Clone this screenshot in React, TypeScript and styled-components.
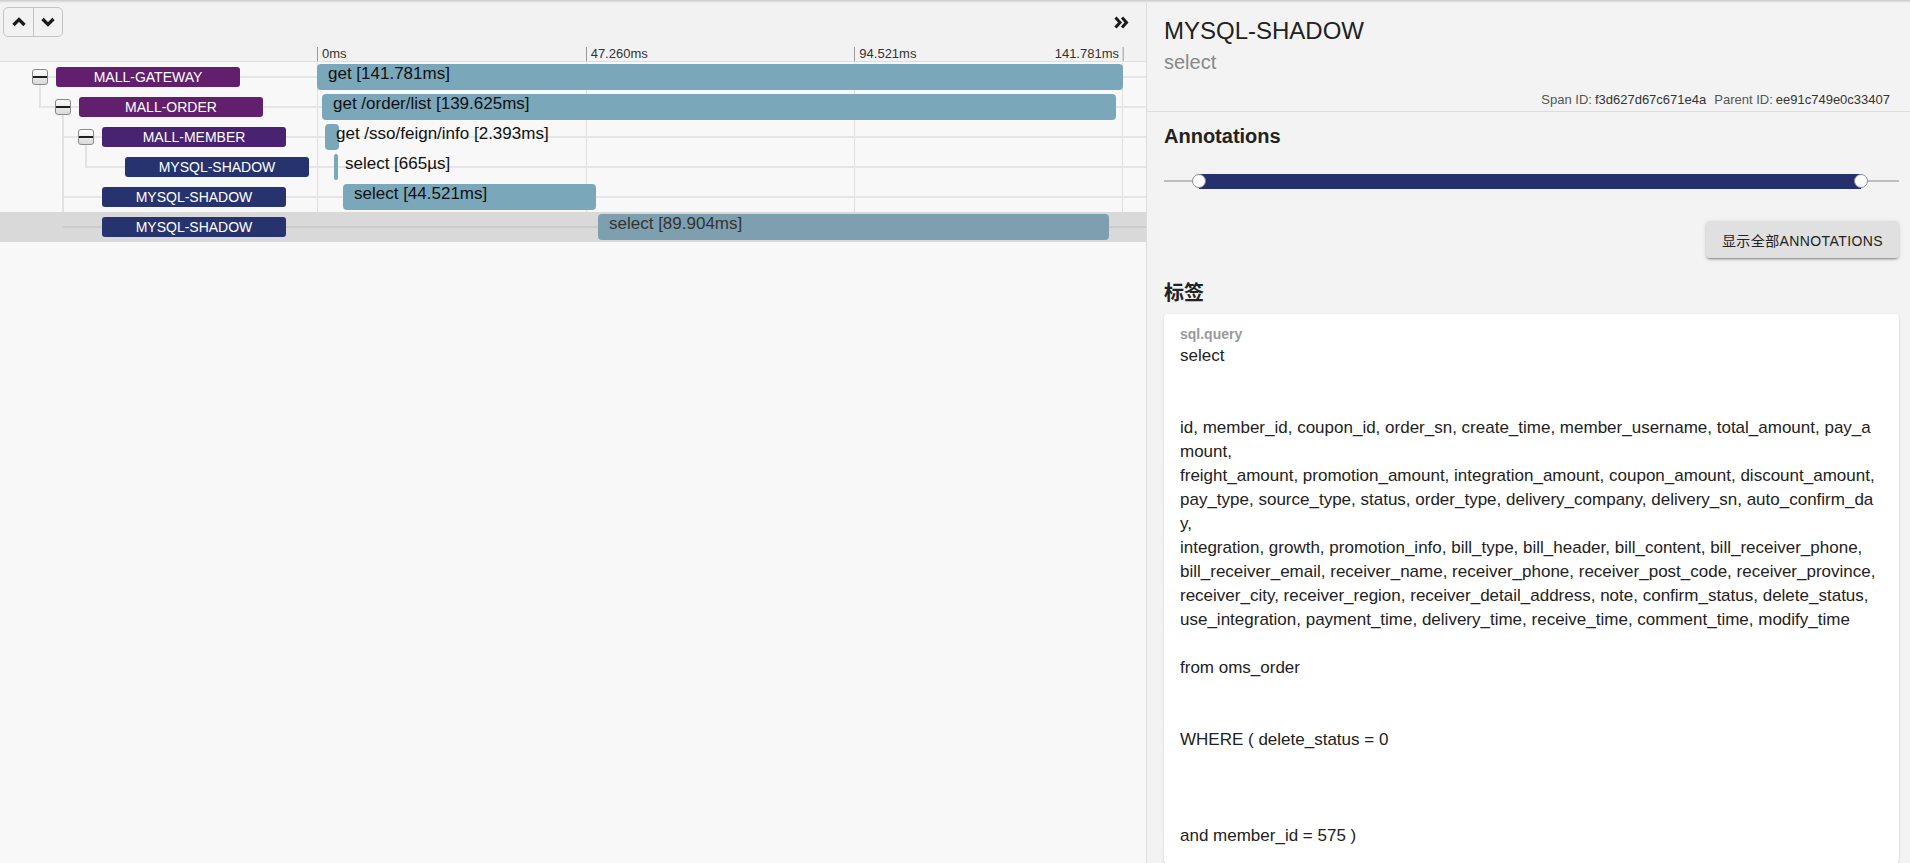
import React from 'react'
import styled, { createGlobalStyle } from 'styled-components'

const GlobalStyle = createGlobalStyle`
  html, body {
    margin: 0;
    padding: 0;
    overflow: hidden;
  }
  body {
    font-family: "Liberation Sans", "Noto Sans CJK SC", Arial, sans-serif;
    color: #222;
    background: #f2f2f2;
  }
`

const ROW_H = 30
const INDENT = 23
const NAME_COL = 317
const AXIS_W = 806
const TOTAL_MS = 141.781

type SpanRow = {
    service: string
    label: string
    depth: number
    start: number
    duration: number
    color: string
    selected?: boolean
}

const spans: SpanRow[] = [
    { service: 'MALL-GATEWAY', label: 'get [141.781ms]', depth: 0, start: 0, duration: 141.781, color: '#621f6d' },
    { service: 'MALL-ORDER', label: 'get /order/list [139.625ms]', depth: 1, start: 0.88, duration: 139.625, color: '#621f6d' },
    { service: 'MALL-MEMBER', label: 'get /sso/feign/info [2.393ms]', depth: 2, start: 1.407, duration: 2.393, color: '#4a2272' },
    { service: 'MYSQL-SHADOW', label: 'select [665µs]', depth: 3, start: 2.99, duration: 0.665, color: '#27336e' },
    { service: 'MYSQL-SHADOW', label: 'select [44.521ms]', depth: 2, start: 4.574, duration: 44.521, color: '#27336e' },
    { service: 'MYSQL-SHADOW', label: 'select [89.904ms]', depth: 2, start: 49.43, duration: 89.904, color: '#27336e', selected: true },
]

const ticks = ['0ms', '47.260ms', '94.521ms', '141.781ms']

const sqlQuery = `select


id, member_id, coupon_id, order_sn, create_time, member_username, total_amount, pay_a
mount,
freight_amount, promotion_amount, integration_amount, coupon_amount, discount_amount,
pay_type, source_type, status, order_type, delivery_company, delivery_sn, auto_confirm_da
y,
integration, growth, promotion_info, bill_type, bill_header, bill_content, bill_receiver_phone,
bill_receiver_email, receiver_name, receiver_phone, receiver_post_code, receiver_province,
receiver_city, receiver_region, receiver_detail_address, note, confirm_status, delete_status,
use_integration, payment_time, delivery_time, receive_time, comment_time, modify_time

from oms_order


WHERE ( delete_status = 0



and member_id = 575 )`

const Page = styled.div`
    width: 1910px;
    height: 863px;
    display: flex;
    flex-direction: column;
`

const TopShade = styled.div`
    height: 3px;
    flex: none;
    background: linear-gradient(#c9c9c9, #f2f2f2);
`

const Main = styled.div`
    flex: 1;
    min-height: 0;
    display: flex;
`

const TracePanel = styled.div`
    width: 1146px;
    flex: none;
    display: flex;
    flex-direction: column;
    background: #f8f8f8;
    border-right: 1px solid #dcdcdc;
`

const Toolbar = styled.div`
    height: 44px;
    box-sizing: border-box;
    padding: 4px 17px 0 3px;
    display: flex;
    justify-content: space-between;
    align-items: flex-start;
    background: #f2f2f2;
`

const NavGroup = styled.div`
    display: flex;
    height: 30px;
    box-sizing: border-box;
    border: 1px solid #c4c4c4;
    border-radius: 5px;
`

const NavButton = styled.button`
    width: 29px;
    height: 100%;
    padding: 0;
    border: none;
    background: transparent;
    display: flex;
    align-items: center;
    justify-content: center;
    color: #1a1a1a;

    & + & {
        border-left: 1px solid #c4c4c4;
    }
`

const ExpandButton = styled.div`
    height: 30px;
    display: flex;
    align-items: center;
    color: #1a1a1a;
`

const AxisRow = styled.div`
    height: 15px;
    box-sizing: border-box;
    display: flex;
    background: #f2f2f2;
    border-bottom: 1px solid #dedede;
`

const AxisSpacer = styled.div`
    width: ${NAME_COL}px;
    flex: none;
`

const Axis = styled.div`
    position: relative;
    width: ${AXIS_W}px;
    flex: none;
`

const Tick = styled.div<{ $end?: boolean }>`
    position: absolute;
    top: 0;
    bottom: 0;
    font-size: 13px;
    line-height: 14px;
    color: #333;
    white-space: nowrap;
    ${p => p.$end
        ? 'border-right: 1px solid #9a9a9a; padding-right: 4px; transform: translateX(-100%);'
        : 'border-left: 1px solid #9a9a9a; padding-left: 4px;'}
`

const Rows = styled.div`
    position: relative;
`

const GridLine = styled.div`
    position: absolute;
    top: 0;
    bottom: 0;
    width: 1px;
    background: #e0e0e0;
`

const TreeLines = styled.svg`
    position: absolute;
    left: 0;
    top: 0;
`

const Row = styled.div<{ $selected?: boolean; $lineLeft: number }>`
    position: relative;
    height: ${ROW_H}px;
    display: flex;
    background: ${p => (p.$selected ? '#d9d9d9' : 'transparent')};

    &::before {
        content: '';
        position: absolute;
        left: ${p => p.$lineLeft}px;
        right: 0;
        top: 14px;
        height: 2px;
        background: ${p => (p.$selected ? '#cccccc' : '#e6e6e6')};
    }
`

const NameCell = styled.div<{ $indent: number }>`
    position: relative;
    width: ${NAME_COL}px;
    flex: none;
    box-sizing: border-box;
    padding-left: ${p => p.$indent}px;
    display: flex;
    align-items: center;
    gap: 8px;
`

const Toggle = styled.span`
    position: relative;
    width: 16px;
    height: 16px;
    flex: none;
    box-sizing: border-box;
    border: 1px solid #8a8a8a;
    border-radius: 3px;
    background: linear-gradient(#fdfdfd, #d9d9d9);

    &::after {
        content: '';
        position: absolute;
        left: 0;
        right: 0;
        top: 6px;
        height: 2px;
        background: #1e1e1e;
    }
`

const ToggleSpacer = styled.span`
    width: 16px;
    flex: none;
`

const ServiceBadge = styled.div<{ $color: string }>`
    width: 184px;
    height: 20px;
    flex: none;
    border-radius: 3px;
    background: ${p => p.$color};
    color: #fff;
    font-size: 14px;
    line-height: 20px;
    text-align: center;
`

const TimelineCell = styled.div`
    position: relative;
    width: ${AXIS_W}px;
    flex: none;
`

const Bar = styled.div<{ $selected?: boolean }>`
    position: absolute;
    top: 2px;
    height: 26px;
    min-width: 3px;
    border-radius: 4px;
    background: ${p => (p.$selected ? '#7e9fb0' : '#7ba7ba')};
`

const BarLabel = styled.span<{ $selected?: boolean }>`
    position: absolute;
    left: 11px;
    top: 0;
    font-size: 17px;
    line-height: 20px;
    white-space: nowrap;
    color: ${p => (p.$selected ? '#333' : '#111')};
`

const DetailPanel = styled.div`
    flex: 1;
    min-width: 0;
    display: flex;
    flex-direction: column;
    background: #f3f3f3;
    overflow: hidden;
`

const DetailHeader = styled.div`
    padding: 12px 20px 1px 17px;
    border-bottom: 1px solid #dcdcdc;
`

const ServiceTitle = styled.h1`
    margin: 0;
    font-size: 24px;
    line-height: 32px;
    font-weight: 400;
    color: #222;
`

const SpanName = styled.div`
    font-size: 20px;
    line-height: 30px;
    color: #888;
`

const IdLine = styled.div`
    margin-top: 13px;
    font-size: 13px;
    line-height: 20px;
    text-align: right;
    color: #555;
`

const IdValue = styled.span`
    color: #333;
    margin: 0 8px 0 3px;

    &:last-child {
        margin-right: 0;
    }
`

const Section = styled.div`
    padding: 8px 11px 0 17px;
`

const SectionTitle = styled.h2<{ $gap?: number }>`
    margin: ${p => p.$gap ?? 0}px 0 0;
    font-size: 20px;
    line-height: 32px;
    font-weight: 700;
    color: #222;
`

const Slider = styled.div`
    position: relative;
    height: 28px;
    margin-top: 15px;

    &::before {
        content: '';
        position: absolute;
        left: 0;
        right: 0;
        top: 13px;
        height: 2px;
        background: #bdbdbd;
    }
`

const SliderTrack = styled.div`
    position: absolute;
    top: 7px;
    height: 15px;
    background: #26306c;
`

const SliderThumb = styled.div`
    position: absolute;
    top: 7px;
    width: 14px;
    height: 14px;
    box-sizing: border-box;
    margin-left: -7px;
    border-radius: 50%;
    background: #fff;
    border: 1px solid #8c8c8c;
`

const ButtonRow = styled.div`
    display: flex;
    justify-content: flex-end;
    margin-top: 26px;
`

const ShowAllButton = styled.button`
    height: 37px;
    padding: 0 16px;
    border: none;
    border-radius: 4px;
    background: #e0e0e0;
    color: #222;
    font-family: inherit;
    font-size: 14px;
    letter-spacing: 0.4px;
    box-shadow: 0 3px 1px -2px rgba(0, 0, 0, 0.2), 0 2px 2px 0 rgba(0, 0, 0, 0.14), 0 1px 5px 0 rgba(0, 0, 0, 0.12);
`

const TagCard = styled.div`
    margin-top: 5px;
    padding: 10px 16px 16px;
    background: #fff;
    border-radius: 4px;
    box-shadow: 0 2px 1px -1px rgba(0, 0, 0, 0.2), 0 1px 1px 0 rgba(0, 0, 0, 0.14), 0 1px 3px 0 rgba(0, 0, 0, 0.12);
`

const TagKey = styled.div`
    font-size: 14px;
    line-height: 20px;
    font-weight: 700;
    color: #9a9a9a;
`

const TagValue = styled.div`
    font-size: 17px;
    line-height: 24px;
    white-space: pre-line;
    word-break: break-all;
    color: #222;
`

const Chevron: React.FC<{ down?: boolean }> = ({ down }) => (
    <svg width="14" height="10" viewBox="0 0 14 10">
        <polyline
            points={down ? '1.5,2 7,7.5 12.5,2' : '1.5,8 7,2.5 12.5,8'}
            fill="none"
            stroke="currentColor"
            strokeWidth="3.2"
        />
    </svg>
)

const DoubleChevron = () => (
    <svg width="15" height="13" viewBox="0 0 15 13">
        <polyline points="1.5,1.5 6,6.5 1.5,11.5" fill="none" stroke="currentColor" strokeWidth="3" />
        <polyline points="8,1.5 12.5,6.5 8,11.5" fill="none" stroke="currentColor" strokeWidth="3" />
    </svg>
)

// vertical connectors: from each parent's toggle down to its last direct child
const treeVerticals = spans.flatMap((s, i) => {
    let last = -1
    for (let j = i + 1; j < spans.length && spans[j].depth > s.depth; j++) {
        if (spans[j].depth === s.depth + 1) last = j
    }
    if (last < 0) return []
    const x = 40 + INDENT * s.depth
    return [{ x, y1: i * ROW_H + 15 + 8, y2: last * ROW_H + 16 }]
})

const hasChildren = (i: number) => i + 1 < spans.length && spans[i + 1].depth > spans[i].depth

export default function App() {
    return (
        <Page>
            <GlobalStyle />
            <TopShade />
            <Main>
                <TracePanel>
                    <Toolbar>
                        <NavGroup>
                            <NavButton><Chevron /></NavButton>
                            <NavButton><Chevron down /></NavButton>
                        </NavGroup>
                        <ExpandButton><DoubleChevron /></ExpandButton>
                    </Toolbar>

                    <AxisRow>
                        <AxisSpacer />
                        <Axis>
                            {ticks.map((t, i) => {
                                const end = i === ticks.length - 1
                                const pct = (i / (ticks.length - 1)) * 100
                                return (
                                    <Tick key={t} $end={end} style={{ left: end ? 'calc(100% + 1px)' : `${pct}%` }}>
                                        {t}
                                    </Tick>
                                )
                            })}
                        </Axis>
                    </AxisRow>

                    <Rows>
                        {ticks.map((t, i) => (
                            <GridLine key={t} style={{ left: NAME_COL + (i / (ticks.length - 1)) * AXIS_W - (i === ticks.length - 1 ? 1 : 0) }} />
                        ))}
                        <TreeLines width={NAME_COL} height={spans.length * ROW_H}>
                            {treeVerticals.map(v => (
                                <line key={`${v.x}-${v.y1}`} x1={v.x} x2={v.x} y1={v.y1} y2={v.y2} stroke="#e2e2e2" strokeWidth="2" />
                            ))}
                        </TreeLines>
                        {spans.map((s, i) => (
                            <Row
                                key={i}
                                $selected={s.selected}
                                $lineLeft={s.depth === 0 ? 40 : 40 + INDENT * (s.depth - 1)}
                            >
                                <NameCell $indent={32 + INDENT * s.depth}>
                                    {hasChildren(i) ? <Toggle /> : <ToggleSpacer />}
                                    <ServiceBadge $color={s.color}>{s.service}</ServiceBadge>
                                </NameCell>
                                <TimelineCell>
                                    <Bar
                                        $selected={s.selected}
                                        style={{
                                            left: `${(s.start / TOTAL_MS) * 100}%`,
                                            width: `${(s.duration / TOTAL_MS) * 100}%`,
                                        }}
                                    >
                                        <BarLabel $selected={s.selected}>{s.label}</BarLabel>
                                    </Bar>
                                </TimelineCell>
                            </Row>
                        ))}
                    </Rows>
                </TracePanel>

                <DetailPanel>
                    <DetailHeader>
                        <ServiceTitle>MYSQL-SHADOW</ServiceTitle>
                        <SpanName>select</SpanName>
                        <IdLine>
                            Span ID:<IdValue>f3d627d67c671e4a</IdValue>
                            Parent ID:<IdValue>ee91c749e0c33407</IdValue>
                        </IdLine>
                    </DetailHeader>

                    <Section>
                        <SectionTitle>Annotations</SectionTitle>
                        <Slider>
                            <SliderTrack style={{ left: 35, right: 38 }} />
                            <SliderThumb style={{ left: 35 }} />
                            <SliderThumb style={{ left: 'calc(100% - 38px)' }} />
                        </Slider>
                        <ButtonRow>
                            <ShowAllButton>显示全部ANNOTATIONS</ShowAllButton>
                        </ButtonRow>

                        <SectionTitle $gap={19}>标签</SectionTitle>
                        <TagCard>
                            <TagKey>sql.query</TagKey>
                            <TagValue>{sqlQuery}</TagValue>
                        </TagCard>
                    </Section>
                </DetailPanel>
            </Main>
        </Page>
    )
}
